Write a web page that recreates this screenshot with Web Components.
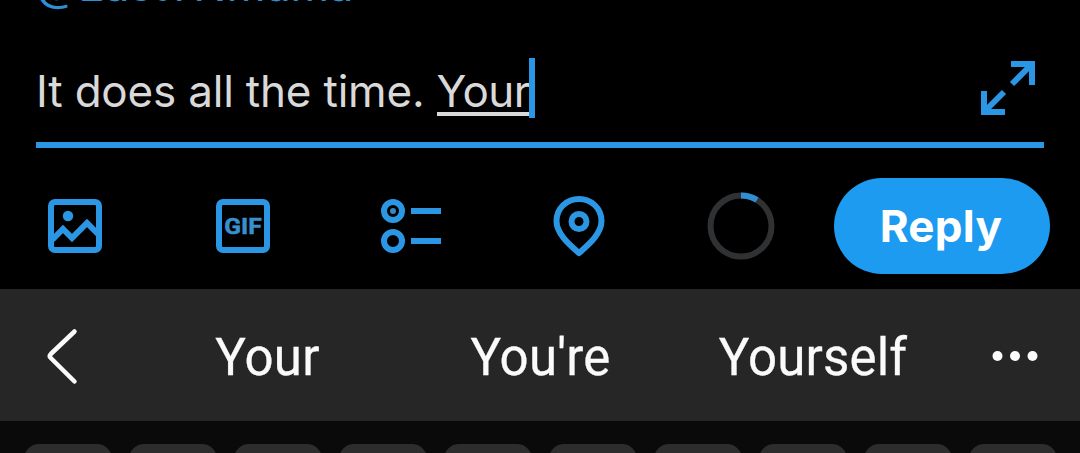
<!DOCTYPE html>
<html lang="en"><head><meta charset="utf-8"><title>Reply</title>
<style>html,body{margin:0;background:#000}body{width:1080px;height:453px;overflow:hidden}</style></head>
<body><reply-screen></reply-screen>
<script>
const define=(name,html)=>customElements.define(name,class extends HTMLElement{
  constructor(){super();const t=document.createElement('template');t.innerHTML=html;
    this.attachShadow({mode:'open'}).append(t.content.cloneNode(true));}
});
define('compose-field',`<style>
:host{display:block;height:148px;box-sizing:border-box;padding:0 36px;overflow:hidden;font-family:Inter,sans-serif}
.to{height:58px;color:#2f8fd2;font-size:44px;line-height:60px;margin-top:-45px;white-space:pre;letter-spacing:-.15px}
.row{display:flex;justify-content:space-between;height:84px;margin-top:45px;border-bottom:6px solid #2b97e4}
.text{display:flex;height:60px;font-size:44px;line-height:66px;color:#d9d9d9;white-space:pre;letter-spacing:-.2px}
.u{border-bottom:4px solid #d9d9d9;height:54px;letter-spacing:-.6px}
.caret{width:6px;height:60px;background:#2b97e4;margin-left:-1px}
svg{display:block;width:56px;height:56px;margin:2px 8px 0 0}
</style><div class="to">@EastTNMama</div><div class="row"><div class="text"><span>It does all the time. </span><span class="u">Your</span><i class="caret"></i></div>
<svg viewBox="0 0 56 56" fill="none" stroke="#2b97e4" stroke-width="6"><path d="M31 4H52V25M50 6L32 24M4 31V52H25M6 50L24 32"/></svg></div>`);
define('reply-button',`<style>:host{display:flex;align-items:center;justify-content:center;width:216px;height:96px;border-radius:48px;background:#1d9bf0;color:#fff;font:700 44px/60px Inter,sans-serif;box-sizing:border-box;padding-right:2px;letter-spacing:.3px}</style><slot></slot>`);
define('compose-tools',`<style>
:host{display:flex;height:141px;box-sizing:border-box;padding:30px 30px 0 39px}
svg{display:block;width:72px;height:72px;margin-top:12px;flex:none}
svg+svg{margin-left:96px}svg.r{margin-left:90px}reply-button{margin-left:57px}
text{font:700 22px Roboto,sans-serif}
</style>
<svg viewBox="39 190 72 72" fill="none" stroke="#2b97e4" stroke-width="6"><rect x="51" y="202" width="48" height="48" rx="4"/><path d="M52 240L63 229L72 238L87 223L99 235"/><circle cx="68" cy="216" r="5.2" fill="#2b97e4" stroke="none"/></svg>
<svg viewBox="207 190 72 72" fill="none" stroke="#2b97e4" stroke-width="6"><rect x="219" y="202" width="48" height="48" rx="4"/><text x="224.300" y="234" textLength="37.500" lengthAdjust="spacingAndGlyphs" fill="#3790d0" stroke="#3790d0" stroke-width=".5">GIF</text></svg>
<svg viewBox="375 190 72 72" fill="none" stroke="#2b97e4" stroke-width="6"><circle cx="393" cy="211" r="9"/><circle cx="393" cy="241" r="9"/><circle cx="393" cy="211" r="3" fill="#3787c0" stroke="none"/><path d="M411 211H441M411 241H441"/></svg>
<svg viewBox="543 190 72 72" fill="none" stroke="#2b97e4" stroke-width="6" stroke-linejoin="round"><path d="M579 253C570 245 556.500 234 556.500 221C556.500 208 567 199 579 199S601.500 208 601.500 221C601.500 234 588 245 579 253Z"/><circle cx="579" cy="221.500" r="7.500"/></svg>
<svg class="r" viewBox="705 190 72 72" fill="none" stroke-width="6"><circle cx="741" cy="226" r="30.500" stroke="#2f3133"/><path d="M741 195.500A30.500 30.500 0 0 1 757 200" stroke="#2f8fd2"/></svg>
<reply-button>Reply</reply-button>`);
define('suggestion-bar',`<style>
:host{display:grid;grid-template-columns:142px 251px 295px 250px 142px;height:132px;background:#262626;color:#fafafa;align-items:center;text-align:center;font:400 51px/60px Roboto,sans-serif;letter-spacing:.2px;-webkit-text-stroke:.3px #fafafa}
span{padding-top:6px}svg{display:block;width:142px;height:132px}
</style><svg viewBox="0 289 142 132" fill="none" stroke="#fafafa" stroke-width="4.500" stroke-linecap="round" stroke-linejoin="round"><path d="M74.500 331.500L50.800 354Q48.800 356 50.800 358L74.500 381.500"/></svg>
<span>Your</span><span>You're</span><span>Yourself</span>
<svg viewBox="938 289 142 132" fill="#fafafa"><circle cx="997.500" cy="356" r="5"/><circle cx="1015" cy="356" r="5"/><circle cx="1032.500" cy="356" r="5"/></svg>`);
define('key-row',`<style>
:host{display:flex;gap:17px;height:32px;box-sizing:border-box;padding:23px 0 0 23.5px;background:#0a0a0a;overflow:hidden}
i{flex:none;width:88px;height:120px;border-radius:15px;background:#2d2d2d}
</style>${'<i></i>'.repeat(10)}`);
define('reply-screen',`<style>:host{display:flex;flex-direction:column;width:1080px;height:453px;overflow:hidden;background:#000}</style>
<compose-field></compose-field><compose-tools></compose-tools><suggestion-bar></suggestion-bar><key-row></key-row>`);
</script></body></html>
